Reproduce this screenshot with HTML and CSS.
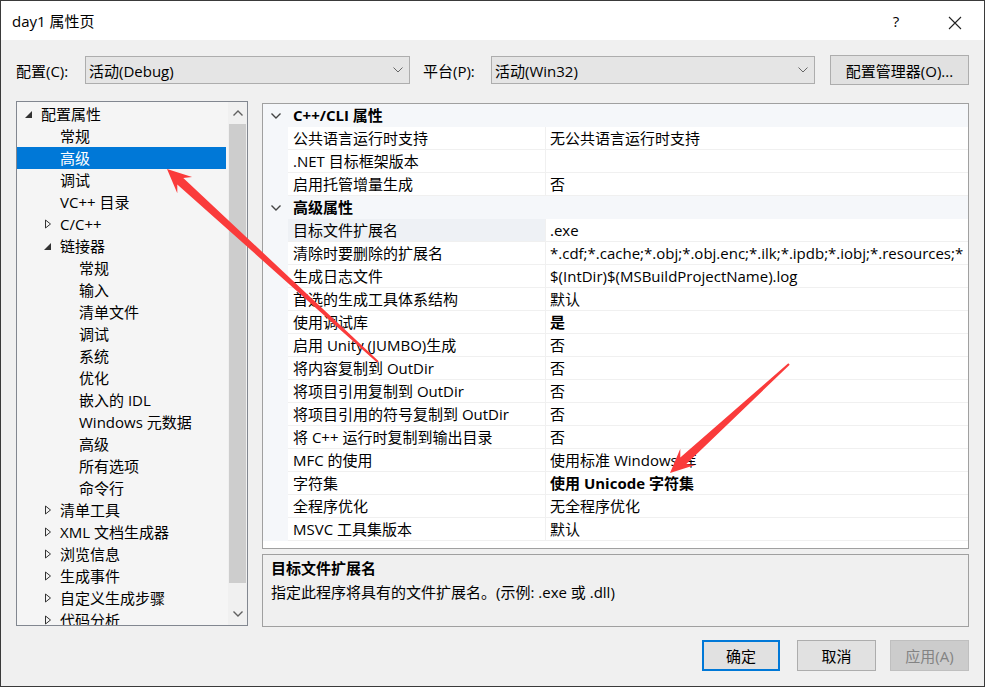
FILE: index.html
```html
<!DOCTYPE html>
<html lang="zh-CN">

<head>
  <meta charset="UTF-8">
  <title>day1 属性页</title>
  <link rel="stylesheet" href="styles.css">
</head>

<body>
  <div class="dialog">
    <div class="titlebar">
      <span class="title">day1 属性页</span>
      <span class="help">?</span>
      <span class="close">
        <svg width="14" height="14" viewBox="0 0 14 14"><path d="M1 1L13 13M13 1L1 13" stroke="#222" stroke-width="1.1" fill="none"/></svg>
      </span>
    </div>

    <div class="content">
      <div class="toolbar">
        <label class="lbl">配置(C):</label>
        <div class="combo combo-config">
          <span>活动(Debug)</span>
          <svg width="10" height="6" viewBox="0 0 10 6"><path d="M0.5 0.5L5 5L9.5 0.5" stroke="#666" fill="none"/></svg>
        </div>
        <label class="lbl lbl-platform">平台(P):</label>
        <div class="combo combo-platform">
          <span>活动(Win32)</span>
          <svg width="10" height="6" viewBox="0 0 10 6"><path d="M0.5 0.5L5 5L9.5 0.5" stroke="#666" fill="none"/></svg>
        </div>
        <button class="btn btn-manager">配置管理器(O)...</button>
      </div>

      <div class="main">
        <div class="tree">
          <ul class="tree-list">
            <li class="lv0"><span class="exp"><svg width="8" height="9" viewBox="0 0 8 9"><path d="M7 1V8H0Z" fill="#333"/></svg></span>配置属性</li>
            <li class="lv1"><span class="exp"></span>常规</li>
            <li class="lv1 selected"><span class="exp"></span>高级</li>
            <li class="lv1"><span class="exp"></span>调试</li>
            <li class="lv1"><span class="exp"></span>VC++ 目录</li>
            <li class="lv1"><span class="exp"><svg width="8" height="10" viewBox="0 0 8 10"><path d="M1.5 1L6.5 5L1.5 9Z" stroke="#333" fill="none"/></svg></span>C/C++</li>
            <li class="lv1"><span class="exp"><svg width="8" height="9" viewBox="0 0 8 9"><path d="M7 1V8H0Z" fill="#333"/></svg></span>链接器</li>
            <li class="lv2"><span class="exp"></span>常规</li>
            <li class="lv2"><span class="exp"></span>输入</li>
            <li class="lv2"><span class="exp"></span>清单文件</li>
            <li class="lv2"><span class="exp"></span>调试</li>
            <li class="lv2"><span class="exp"></span>系统</li>
            <li class="lv2"><span class="exp"></span>优化</li>
            <li class="lv2"><span class="exp"></span>嵌入的 IDL</li>
            <li class="lv2"><span class="exp"></span>Windows 元数据</li>
            <li class="lv2"><span class="exp"></span>高级</li>
            <li class="lv2"><span class="exp"></span>所有选项</li>
            <li class="lv2"><span class="exp"></span>命令行</li>
            <li class="lv1"><span class="exp"><svg width="8" height="10" viewBox="0 0 8 10"><path d="M1.5 1L6.5 5L1.5 9Z" stroke="#333" fill="none"/></svg></span>清单工具</li>
            <li class="lv1"><span class="exp"><svg width="8" height="10" viewBox="0 0 8 10"><path d="M1.5 1L6.5 5L1.5 9Z" stroke="#333" fill="none"/></svg></span>XML 文档生成器</li>
            <li class="lv1"><span class="exp"><svg width="8" height="10" viewBox="0 0 8 10"><path d="M1.5 1L6.5 5L1.5 9Z" stroke="#333" fill="none"/></svg></span>浏览信息</li>
            <li class="lv1"><span class="exp"><svg width="8" height="10" viewBox="0 0 8 10"><path d="M1.5 1L6.5 5L1.5 9Z" stroke="#333" fill="none"/></svg></span>生成事件</li>
            <li class="lv1"><span class="exp"><svg width="8" height="10" viewBox="0 0 8 10"><path d="M1.5 1L6.5 5L1.5 9Z" stroke="#333" fill="none"/></svg></span>自定义生成步骤</li>
            <li class="lv1"><span class="exp"><svg width="8" height="10" viewBox="0 0 8 10"><path d="M1.5 1L6.5 5L1.5 9Z" stroke="#333" fill="none"/></svg></span>代码分析</li>
          </ul>
          <div class="scrollbar">
            <div class="sb-btn">
              <svg width="10" height="6" viewBox="0 0 10 6"><path d="M0.5 5.5L5 1L9.5 5.5" stroke="#606060" stroke-width="1.4" fill="none"/></svg>
            </div>
            <div class="sb-track">
              <div class="sb-thumb"></div>
            </div>
            <div class="sb-btn">
              <svg width="10" height="6" viewBox="0 0 10 6"><path d="M0.5 0.5L5 5L9.5 0.5" stroke="#606060" stroke-width="1.4" fill="none"/></svg>
            </div>
          </div>
        </div>

        <div class="right">
          <div class="grid">
            <div class="row cat">
              <span class="margin"><svg width="10" height="6" viewBox="0 0 10 6"><path d="M0.5 0.5L5 5L9.5 0.5" stroke="#444" stroke-width="1.4" fill="none"/></svg></span>
              <span class="cat-name">C++/CLI 属性</span>
            </div>
            <div class="row"><span class="margin"></span><span class="name">公共语言运行时支持</span><span class="value">无公共语言运行时支持</span></div>
            <div class="row"><span class="margin"></span><span class="name">.NET 目标框架版本</span><span class="value"></span></div>
            <div class="row"><span class="margin"></span><span class="name">启用托管增量生成</span><span class="value">否</span></div>
            <div class="row cat">
              <span class="margin"><svg width="10" height="6" viewBox="0 0 10 6"><path d="M0.5 0.5L5 5L9.5 0.5" stroke="#444" stroke-width="1.4" fill="none"/></svg></span>
              <span class="cat-name">高级属性</span>
            </div>
            <div class="row current"><span class="margin"></span><span class="name">目标文件扩展名</span><span class="value">.exe</span></div>
            <div class="row"><span class="margin"></span><span class="name">清除时要删除的扩展名</span><span class="value">*.cdf;*.cache;*.obj;*.obj.enc;*.ilk;*.ipdb;*.iobj;*.resources;*</span></div>
            <div class="row"><span class="margin"></span><span class="name">生成日志文件</span><span class="value">$(IntDir)$(MSBuildProjectName).log</span></div>
            <div class="row"><span class="margin"></span><span class="name">首选的生成工具体系结构</span><span class="value">默认</span></div>
            <div class="row"><span class="margin"></span><span class="name">使用调试库</span><span class="value bold">是</span></div>
            <div class="row"><span class="margin"></span><span class="name">启用 Unity (JUMBO)生成</span><span class="value">否</span></div>
            <div class="row"><span class="margin"></span><span class="name">将内容复制到 OutDir</span><span class="value">否</span></div>
            <div class="row"><span class="margin"></span><span class="name">将项目引用复制到 OutDir</span><span class="value">否</span></div>
            <div class="row"><span class="margin"></span><span class="name">将项目引用的符号复制到 OutDir</span><span class="value">否</span></div>
            <div class="row"><span class="margin"></span><span class="name">将 C++ 运行时复制到输出目录</span><span class="value">否</span></div>
            <div class="row"><span class="margin"></span><span class="name">MFC 的使用</span><span class="value">使用标准 Windows 库</span></div>
            <div class="row"><span class="margin"></span><span class="name">字符集</span><span class="value bold">使用 Unicode 字符集</span></div>
            <div class="row"><span class="margin"></span><span class="name">全程序优化</span><span class="value">无全程序优化</span></div>
            <div class="row"><span class="margin"></span><span class="name">MSVC 工具集版本</span><span class="value">默认</span></div>
          </div>

          <div class="desc">
            <div class="desc-title">目标文件扩展名</div>
            <div class="desc-text">指定此程序将具有的文件扩展名。(示例: .exe 或 .dll)</div>
          </div>
        </div>
      </div>

      <div class="footer">
        <button class="btn btn-ok">确定</button>
        <button class="btn btn-cancel">取消</button>
        <button class="btn btn-apply" disabled>应用(A)</button>
      </div>
    </div>
  </div>

  <!-- red annotation arrows drawn over the dialog -->
  <svg class="marks" width="988" height="688" viewBox="0 0 988 688">
    <polygon points="167,169 192.1,177.1 183.3,177.9 378.7,361.3 377.3,362.7 177.3,184.5 177.3,193.3" fill="#fa3b3b"/>
    <polygon points="670,473 680.3,448.7 680.3,457.5 788.3,363.3 789.7,364.7 686.3,464.1 695.1,464.9" fill="#fa3b3b"/>
  </svg>
</body>

</html>
```

FILE: styles.css
```css
body {
  margin: 0;
  background-color: #fff;
  font-family: "Open Sans", "Noto Sans CJK SC", sans-serif;
  font-size: 15px;
  color: #000;
}

.dialog {
  box-sizing: border-box;
  width: 985px;
  height: 687px;
  border: 1px solid #3a3a3a;
  background-color: #f0f0f0;
  display: flex;
  flex-direction: column;
}

.titlebar {
  height: 39px;
  background-color: #fff;
  display: flex;
  align-items: center;
  padding-left: 11px;
}

.title {
  flex: 1;
}

.help {
  width: 20px;
  text-align: center;
  margin-right: 42px;
}

.close {
  width: 14px;
  height: 14px;
  margin-right: 22px;
}

.content {
  flex: 1;
  padding: 15px 15px 0 15px;
  display: flex;
  flex-direction: column;
}

/* configuration / platform row */
.toolbar {
  display: flex;
  align-items: center;
  height: 30px;
}

.lbl {
  width: 69px;
}

.lbl-platform {
  margin-left: 13px;
  width: 68px;
}

.combo {
  box-sizing: border-box;
  height: 28px;
  border: 1px solid #adadad;
  background-color: #e5e5e5;
  display: flex;
  align-items: center;
  justify-content: space-between;
  padding: 0 6px 0 3px;
}

.combo-config {
  width: 325px;
}

.combo-platform {
  width: 324px;
}

.btn {
  box-sizing: border-box;
  font-family: inherit;
  font-size: 15px;
  background-color: #e1e1e1;
  border: 1px solid #adadad;
  color: #000;
  padding: 0;
}

.btn-manager {
  margin-left: auto;
  width: 139px;
  height: 30px;
}

/* tree + property grid */
.main {
  display: flex;
  margin-top: 16px;
}

.tree {
  box-sizing: border-box;
  width: 232px;
  height: 525px;
  border: 1px solid #828790;
  background-color: #f5f5f5;
  display: flex;
  overflow: hidden;
}

.tree-list {
  list-style: none;
  margin: 0;
  padding: 1px 0 0 0;
  flex: 1;
  overflow: hidden;
}

.tree-list li {
  height: 22px;
  line-height: 22px;
  white-space: nowrap;
  display: flex;
  align-items: center;
}

.tree-list .exp {
  width: 16px;
  flex: none;
  display: flex;
  align-items: center;
}

.tree-list .lv0 {
  padding-left: 8px;
}

.tree-list .lv1 {
  padding-left: 27px;
}

.tree-list .lv2 {
  padding-left: 46px;
}

.tree-list .selected {
  background-color: #0078d7;
  color: #fff;
  margin-right: 2px;
}

.scrollbar {
  width: 19px;
  flex: none;
  display: flex;
  flex-direction: column;
  background-color: #f0f0f0;
}

.sb-btn {
  height: 22px;
  display: flex;
  align-items: center;
  justify-content: center;
}

.sb-track {
  flex: 1;
}

.sb-thumb {
  height: 459px;
  margin: 0 1px;
  background-color: #cdcdcd;
}

.right {
  width: 707px;
  margin-left: 14px;
  margin-top: 2px;
  display: flex;
  flex-direction: column;
  gap: 5px;
}

.grid {
  box-sizing: border-box;
  height: 446px;
  border: 1px solid #a0a0a0;
  background-color: #fff;
  overflow: hidden;
}

.row {
  display: flex;
  height: 23px;
  line-height: 22px;
}

.row .margin {
  width: 25px;
  flex: none;
  background-color: #f5f7fa;
  display: flex;
  align-items: center;
  justify-content: center;
  padding-left: 1px;
  box-sizing: border-box;
}

.row .name {
  box-sizing: border-box;
  width: 258px;
  flex: none;
  padding-left: 5px;
  border-bottom: 1px solid #f0f0f0;
  border-right: 1px solid #f0f0f0;
  white-space: nowrap;
  overflow: hidden;
}

.row .value {
  flex: 1;
  padding-left: 4px;
  border-bottom: 1px solid #f0f0f0;
  white-space: nowrap;
  overflow: hidden;
}

.row.current .name {
  background-color: #eef1f5;
}

.row.cat {
  background-color: #f5f7fa;
  font-weight: bold;
}

.cat-name {
  padding-left: 5px;
}

.bold {
  font-weight: bold;
}

.desc {
  box-sizing: border-box;
  height: 73px;
  border: 1px solid #a0a0a0;
  background-color: #f0f0f0;
  padding: 2px 8px;
}

.desc-title {
  font-weight: bold;
  line-height: 22px;
}

.desc-text {
  line-height: 26px;
}

/* dialog buttons */
.footer {
  display: flex;
  justify-content: flex-end;
  margin-top: 13px;
}

.footer .btn {
  height: 31px;
  width: 79px;
  margin-left: 14px;
}

.footer .btn-ok {
  width: 78px;
  border: 2px solid #0078d7;
}

.footer .btn-cancel {
  margin-left: 17px;
}

.footer .btn-apply {
  background-color: #cccccc;
  border-color: #bfbfbf;
  color: #838383;
}

.marks {
  position: absolute;
  left: 0;
  top: 0;
  pointer-events: none;
}
```
